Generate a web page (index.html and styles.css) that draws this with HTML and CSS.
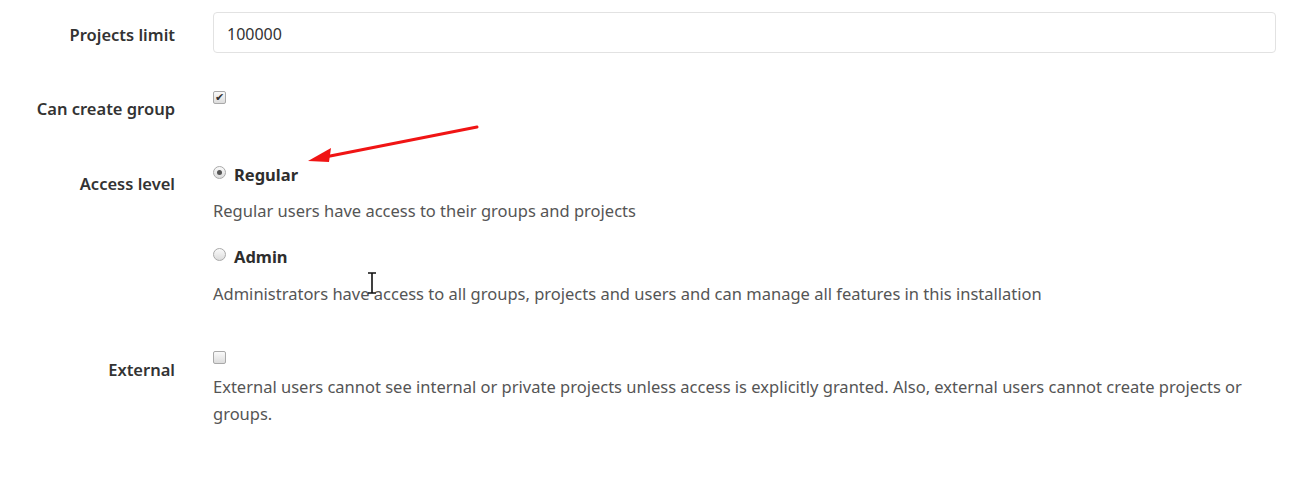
FILE: index.html
```html
<!DOCTYPE html>
<html>
<head>
    <title>Edit user</title>
    <link rel="stylesheet" href="styles.css">
</head>
<body>
    <form class="user-form">
        <div class="form-group row-limit">
            <label class="control-label" for="projects_limit">Projects limit</label>
            <div class="controls">
                <input class="form-control" id="projects_limit" type="text" value="100000">
            </div>
        </div>

        <div class="form-group row-group">
            <label class="control-label">Can create group</label>
            <div class="controls">
                <input class="check" type="checkbox" checked>
            </div>
        </div>

        <div class="form-group row-access">
            <label class="control-label">Access level</label>
            <div class="controls">
                <div class="radio-line">
                    <input class="radio" type="radio" name="access" checked>
                    <span class="option">Regular</span>
                </div>
                <p class="help first">Regular users have access to their groups and projects</p>
                <div class="radio-line second">
                    <input class="radio" type="radio" name="access">
                    <span class="option">Admin</span>
                </div>
                <p class="help admin-help">Administrators have access to all groups, projects and users and can manage all features in this installation</p>
            </div>
        </div>

        <div class="form-group row-external">
            <label class="control-label">External</label>
            <div class="controls">
                <input class="check" type="checkbox">
                <p class="help ext-help">External users cannot see internal or private projects unless access is explicitly granted. Also, external users cannot create projects or groups.</p>
            </div>
        </div>
    </form>

    <!-- annotation arrow drawn on the screenshot -->
    <svg class="arrow" width="200" height="60" viewBox="0 0 200 60">
        <line x1="179" y1="7" x2="22" y2="38" stroke="#f01414" stroke-width="3" stroke-linecap="round"/>
        <polygon points="10,41 33,28 31,42" fill="#f01414"/>
    </svg>

    <!-- text cursor -->
    <svg class="ibeam" width="12" height="22" viewBox="0 0 12 22">
        <path d="M2 1h8M6 1v20M2 21h8" stroke="#111" stroke-width="1.6" fill="none"/>
    </svg>
</body>
</html>
```

FILE: styles.css
```css
body {
    margin: 0;
    background: #fff;
    font-family: "Noto Sans", "Open Sans", sans-serif;
    font-size: 16.5px;
    color: #2e2e2e;
}

.user-form {
    padding: 12px 15px 0 0;
}

.form-group {
    display: grid;
    grid-template-columns: 175px 1fr;
    column-gap: 38px;
}

.control-label {
    text-align: right;
    font-weight: 600;
    line-height: 24px;
    color: #333;
}

.row-limit .control-label { padding-top: 11px; }
.row-group { margin-top: 27px; }
.row-group .control-label { padding-top: 17px; }
.row-access { margin-top: 42px; }
.row-access .control-label { padding-top: 9px; }
.row-external { margin-top: 39px; }
.row-external .control-label { padding-top: 12px; }

.form-control {
    box-sizing: border-box;
    width: 100%;
    height: 41px;
    padding: 2px 13px 0;
    border: 1px solid #e2e2e2;
    border-radius: 4px;
    font-family: inherit;
    font-size: 16px;
    color: #333;
    outline: none;
}

.check,
.radio {
    appearance: none;
    -webkit-appearance: none;
    display: block;
    box-sizing: border-box;
    width: 13px;
    height: 13px;
    margin: 0;
    border: 1px solid #a9a9a9;
    background: linear-gradient(#fafafa, #dcdcdc);
    position: relative;
}

.check {
    border-radius: 2px;
}

.row-group .check { margin-top: 11px; }
.row-external .check { margin-top: 5px; }

.check:checked::after {
    content: "\2714";
    position: absolute;
    left: 1px;
    top: -1px;
    font-size: 11px;
    line-height: 12px;
    color: #333;
}

.radio {
    border-radius: 50%;
    margin-top: 3px;
}

.radio:checked::after {
    content: "";
    position: absolute;
    left: 3px;
    top: 3px;
    width: 5px;
    height: 5px;
    border-radius: 50%;
    background: #555;
}

.radio-line {
    display: flex;
    align-items: flex-start;
    gap: 8px;
    line-height: 24px;
}

.radio-line.second {
    margin-top: 21px;
}

.option {
    font-weight: 700;
    color: #2e2e2e;
}

.help {
    margin: 0;
    color: #555;
    line-height: 27px;
}

.help.first { margin-top: 10px; }
.help.admin-help { margin-top: 11px; }
.help.ext-help { margin-top: 9px; }

.arrow {
    position: absolute;
    left: 298px;
    top: 120px;
}

.ibeam {
    position: absolute;
    left: 366px;
    top: 272px;
}
```
